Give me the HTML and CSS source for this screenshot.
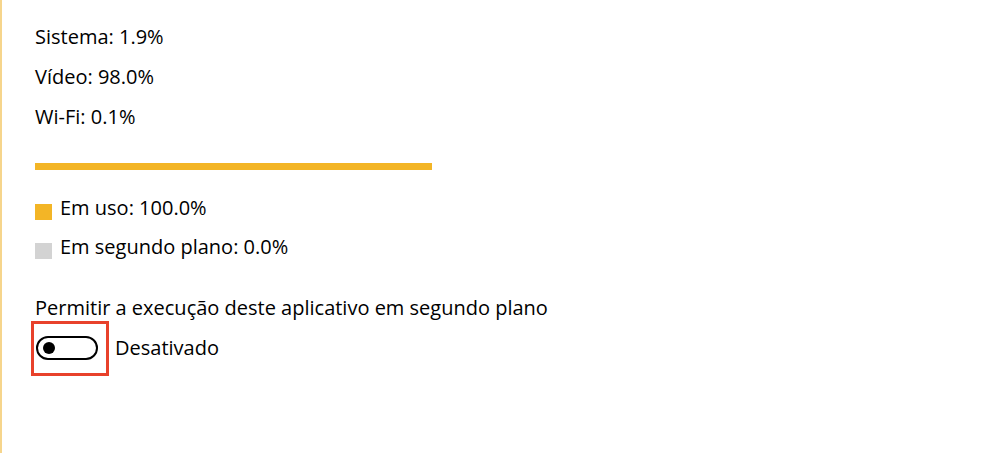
FILE: index.html
```html
<!DOCTYPE html>
<html lang="pt">
<head>
<meta charset="utf-8">
<link rel="stylesheet" href="styles.css">
</head>
<body>
<div class="page">
  <div class="line">Sistema: 1.9%</div>
  <div class="line">Vídeo: 98.0%</div>
  <div class="line">Wi-Fi: 0.1%</div>
  <div class="bar"></div>
  <div class="legend">
    <div class="legend-row"><span class="swatch swatch-used"></span><span>Em uso: 100.0%</span></div>
    <div class="legend-row"><span class="swatch swatch-bg"></span><span>Em segundo plano: 0.0%</span></div>
  </div>
  <div class="line label">Permitir a execução deste aplicativo em segundo plano</div>
  <div class="toggle-row">
    <div class="toggle-wrap">
      <div class="toggle"><span class="knob"></span></div>
    </div>
    <span class="state">Desativado</span>
  </div>
</div>
</body>
</html>
```
FILE: styles.css
```css
html, body {
  margin: 0;
  padding: 0;
  background: #ffffff;
}
.page {
  box-sizing: border-box;
  height: 453px;
  border-left: 2px solid #f6d58c;
  padding: 17px 0 0 33px;
  font-family: "Open Sans", "Noto Sans", sans-serif;
  font-size: 20px;
  color: #000000;
}
.line {
  height: 40px;
  line-height: 40px;
  white-space: nowrap;
}
.bar {
  margin-top: 26px;
  width: 397px;
  height: 7px;
  background: #f3b526;
}
.legend {
  margin-top: 18px;
  display: flex;
  flex-direction: column;
}
.legend-row {
  display: flex;
  align-items: center;
  gap: 8px;
  height: 39px;
}
.swatch {
  width: 17px;
  height: 16px;
  margin-top: 8px;
  flex: none;
}
.swatch-used { background: #f3b526; }
.swatch-bg { background: #d3d3d3; }
.label {
  margin-top: 22px;
}
.toggle-row {
  margin-top: 8px;
  display: flex;
  align-items: center;
  gap: 17px;
  height: 24px;
}
.toggle-wrap {
  position: relative;
  margin-left: 1px;
}
.toggle-wrap::after {
  content: "";
  position: absolute;
  left: -5px;
  top: -15px;
  width: 72px;
  height: 49px;
  border: 3px solid #e8412b;
}
.toggle {
  box-sizing: border-box;
  width: 62px;
  height: 24px;
  border: 2px solid #000000;
  border-radius: 12px;
  display: flex;
  align-items: center;
  padding-left: 5px;
}
.knob {
  width: 12px;
  height: 12px;
  border-radius: 50%;
  background: #000000;
}
.state {
  line-height: 24px;
}
```
